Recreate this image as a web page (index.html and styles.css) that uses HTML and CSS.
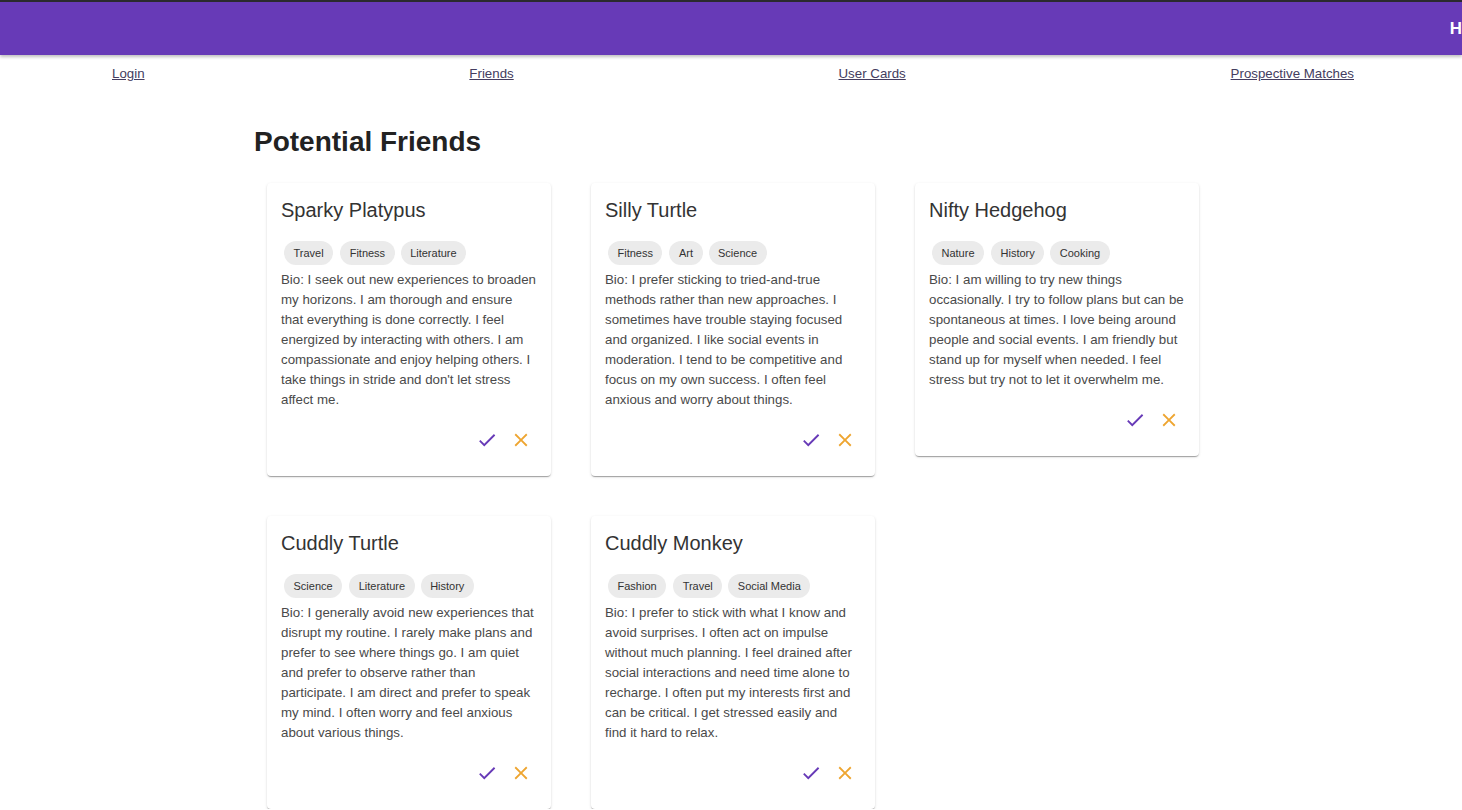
FILE: index.html
```html
<!DOCTYPE html>
<html lang="en">
<head>
<meta charset="utf-8">
<title>Potential Friends</title>
<link rel="stylesheet" href="styles.css">
</head>
<body>
<header class="appbar"><span class="appbar-title">H</span></header>
<nav class="nav">
  <a href="#">Login</a>
  <a href="#">Friends</a>
  <a href="#">User Cards</a>
  <a href="#">Prospective Matches</a>
</nav>
<main class="main">
  <h1 class="title">Potential Friends</h1>
  <div class="grid">
    <div class="card">
      <h2 class="name">Sparky Platypus</h2>
      <div class="chips"><span class="chip">Travel</span><span class="chip">Fitness</span><span class="chip">Literature</span></div>
      <p class="bio">Bio: I seek out new experiences to broaden my horizons. I am thorough and ensure that everything is done correctly. I feel energized by interacting with others. I am compassionate and enjoy helping others. I take things in stride and don't let stress affect me.</p>
      <div class="actions">
        <button class="btn accept"><svg viewBox="0 0 24 24"><path d="M9 16.17 4.83 12l-1.42 1.41L9 19 21 7l-1.41-1.41z"/></svg></button>
        <button class="btn reject"><svg viewBox="0 0 24 24"><path d="M19 6.41 17.59 5 12 10.59 6.41 5 5 6.41 10.59 12 5 17.59 6.41 19 12 13.41 17.59 19 19 17.59 13.41 12z"/></svg></button>
      </div>
    </div>
    <div class="card">
      <h2 class="name">Silly Turtle</h2>
      <div class="chips"><span class="chip">Fitness</span><span class="chip">Art</span><span class="chip">Science</span></div>
      <p class="bio">Bio: I prefer sticking to tried-and-true methods rather than new approaches. I sometimes have trouble staying focused and organized. I like social events in moderation. I tend to be competitive and focus on my own success. I often feel anxious and worry about things.</p>
      <div class="actions">
        <button class="btn accept"><svg viewBox="0 0 24 24"><path d="M9 16.17 4.83 12l-1.42 1.41L9 19 21 7l-1.41-1.41z"/></svg></button>
        <button class="btn reject"><svg viewBox="0 0 24 24"><path d="M19 6.41 17.59 5 12 10.59 6.41 5 5 6.41 10.59 12 5 17.59 6.41 19 12 13.41 17.59 19 19 17.59 13.41 12z"/></svg></button>
      </div>
    </div>
    <div class="card">
      <h2 class="name">Nifty Hedgehog</h2>
      <div class="chips"><span class="chip">Nature</span><span class="chip">History</span><span class="chip">Cooking</span></div>
      <p class="bio">Bio: I am willing to try new things occasionally. I try to follow plans but can be spontaneous at times. I love being around people and social events. I am friendly but stand up for myself when needed. I feel stress but try not to let it overwhelm me.</p>
      <div class="actions">
        <button class="btn accept"><svg viewBox="0 0 24 24"><path d="M9 16.17 4.83 12l-1.42 1.41L9 19 21 7l-1.41-1.41z"/></svg></button>
        <button class="btn reject"><svg viewBox="0 0 24 24"><path d="M19 6.41 17.59 5 12 10.59 6.41 5 5 6.41 10.59 12 5 17.59 6.41 19 12 13.41 17.59 19 19 17.59 13.41 12z"/></svg></button>
      </div>
    </div>
    <div class="card">
      <h2 class="name">Cuddly Turtle</h2>
      <div class="chips"><span class="chip">Science</span><span class="chip">Literature</span><span class="chip">History</span></div>
      <p class="bio">Bio: I generally avoid new experiences that disrupt my routine. I rarely make plans and prefer to see where things go. I am quiet and prefer to observe rather than participate. I am direct and prefer to speak my mind. I often worry and feel anxious about various things.</p>
      <div class="actions">
        <button class="btn accept"><svg viewBox="0 0 24 24"><path d="M9 16.17 4.83 12l-1.42 1.41L9 19 21 7l-1.41-1.41z"/></svg></button>
        <button class="btn reject"><svg viewBox="0 0 24 24"><path d="M19 6.41 17.59 5 12 10.59 6.41 5 5 6.41 10.59 12 5 17.59 6.41 19 12 13.41 17.59 19 19 17.59 13.41 12z"/></svg></button>
      </div>
    </div>
    <div class="card">
      <h2 class="name">Cuddly Monkey</h2>
      <div class="chips"><span class="chip">Fashion</span><span class="chip">Travel</span><span class="chip">Social Media</span></div>
      <p class="bio">Bio: I prefer to stick with what I know and avoid surprises. I often act on impulse without much planning. I feel drained after social interactions and need time alone to recharge. I often put my interests first and can be critical. I get stressed easily and find it hard to relax.</p>
      <div class="actions">
        <button class="btn accept"><svg viewBox="0 0 24 24"><path d="M9 16.17 4.83 12l-1.42 1.41L9 19 21 7l-1.41-1.41z"/></svg></button>
        <button class="btn reject"><svg viewBox="0 0 24 24"><path d="M19 6.41 17.59 5 12 10.59 6.41 5 5 6.41 10.59 12 5 17.59 6.41 19 12 13.41 17.59 19 19 17.59 13.41 12z"/></svg></button>
      </div>
    </div>
  </div>
</main>
</body>
</html>
```
FILE: styles.css
```css
* { box-sizing: border-box; }
html, body { margin: 0; padding: 0; }
body {
  font-family: "Liberation Sans", Arial, sans-serif;
  background: #fff;
  color: #222;
  overflow-x: hidden;
}
.appbar {
  height: 55px;
  border-top: 2px solid #2a2a2e;
  background: #673ab7;
  box-shadow: 0 2px 3px rgba(0,0,0,0.25);
  display: flex;
  align-items: center;
  justify-content: flex-end;
  padding-right: 0;
  position: relative;
  z-index: 1;
}
.appbar-title {
  color: #fff;
  font-weight: bold;
  font-size: 17px;
  line-height: 20px;
}
.nav {
  display: flex;
  justify-content: space-between;
  padding: 11px 108px 0 112px;
}
.nav a {
  font-size: 13.3px;
  line-height: 16px;
  color: #443d60;
  text-decoration: underline;
}
.main {
  width: 954px;
  margin: 0 auto;
  padding-top: 44px;
}
.title {
  margin: 0 0 25px;
  font-size: 28px;
  line-height: 32px;
  font-weight: bold;
  color: #222;
}
.grid {
  display: grid;
  grid-template-columns: repeat(3, 284px);
  column-gap: 40px;
  row-gap: 40px;
  align-items: start;
  padding-left: 13px;
}
.card {
  background: #fff;
  border-radius: 4px;
  box-shadow: 0 2px 1px -1px rgba(0,0,0,0.2), 0 1px 1px 0 rgba(0,0,0,0.14), 0 1px 3px 0 rgba(0,0,0,0.12);
  padding: 15px 13px 0 14px;
}
.name {
  margin: 0;
  font-size: 20px;
  line-height: 24px;
  font-weight: normal;
  color: #333;
}
.chips {
  display: flex;
  margin-top: 19px;
}
.chip {
  height: 24px;
  line-height: 24px;
  padding: 0 9.5px;
  margin: 0 3px;
  border-radius: 12px;
  background: #ebebeb;
  font-size: 11px;
  color: #333;
}
.chip:first-child { margin-left: 3px; margin-right: 4px; }
.bio {
  margin: 5px 0 0;
  font-size: 13.3px;
  line-height: 20px;
  color: #4a4a4a;
}
.actions {
  display: flex;
  justify-content: flex-end;
  gap: 4px;
  padding: 15px 2px 21px 0;
}
.btn {
  width: 30px;
  height: 30px;
  padding: 0;
  border: 0;
  background: none;
  display: flex;
  align-items: center;
  justify-content: center;
  cursor: pointer;
}
.btn svg { width: 22px; height: 22px; }
.accept svg { fill: #673ab7; }
.reject svg { fill: #eea530; }
```
